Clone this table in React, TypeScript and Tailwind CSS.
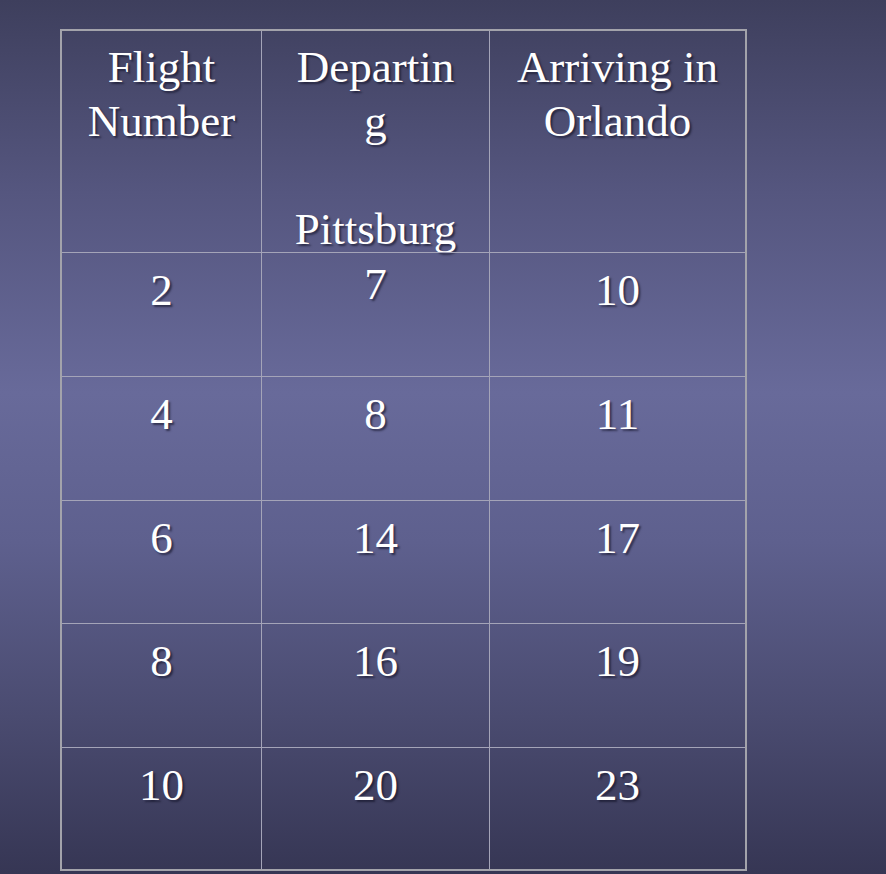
const rows = [
  ['2', '7', '10'],
  ['4', '8', '11'],
  ['6', '14', '17'],
  ['8', '16', '19'],
  ['10', '20', '23'],
];

const rowHeights = ['h-[124px]', 'h-[124px]', 'h-[123px]', 'h-[124px]', 'h-[122px]'];

const cellText =
  "text-white text-[45px] text-center [text-shadow:2px_2px_2px_rgba(15,15,35,0.6)]";

export default function App() {
  return (
    <div
      className="w-[886px] h-[874px] overflow-hidden pl-[60px] pt-[29px] bg-[linear-gradient(to_bottom,#3e3f5d_0%,#55567f_22%,#686a9a_45%,#5e608e_62%,#4a4b70_82%,#363654_100%)]"
      style={{ fontFamily: "'Liberation Serif', 'Times New Roman', serif" }}
    >
      <div className="w-[687px] border-2 border-[#a3a3ab] grid grid-cols-[199px_228px_256px]">
        {/* header row */}
        <div className={`h-[221px] pt-[9px] leading-[54px] ${cellText}`}>
          Flight
          <br />
          Number
        </div>
        <div className={`h-[221px] pt-[9px] leading-[54px] border-l border-[#a4a4b8] ${cellText}`}>
          Departin
          <br />
          g
          <br />
          <br />
          Pittsburg
        </div>
        <div className={`h-[221px] pt-[9px] leading-[54px] border-l border-[#a4a4b8] ${cellText}`}>
          Arriving in
          <br />
          Orlando
        </div>

        {rows.map((r, i) =>
          r.map((v, j) => (
            <div
              key={`${i}-${j}`}
              className={`${rowHeights[i]} leading-[50px] border-t border-[#a4a4b8] ${j > 0 ? 'border-l' : ''} ${
                i === 0 && j === 1 ? 'pt-[6px]' : 'pt-3'
              } ${cellText}`}
            >
              {v}
            </div>
          ))
        )}
      </div>
    </div>
  );
}
